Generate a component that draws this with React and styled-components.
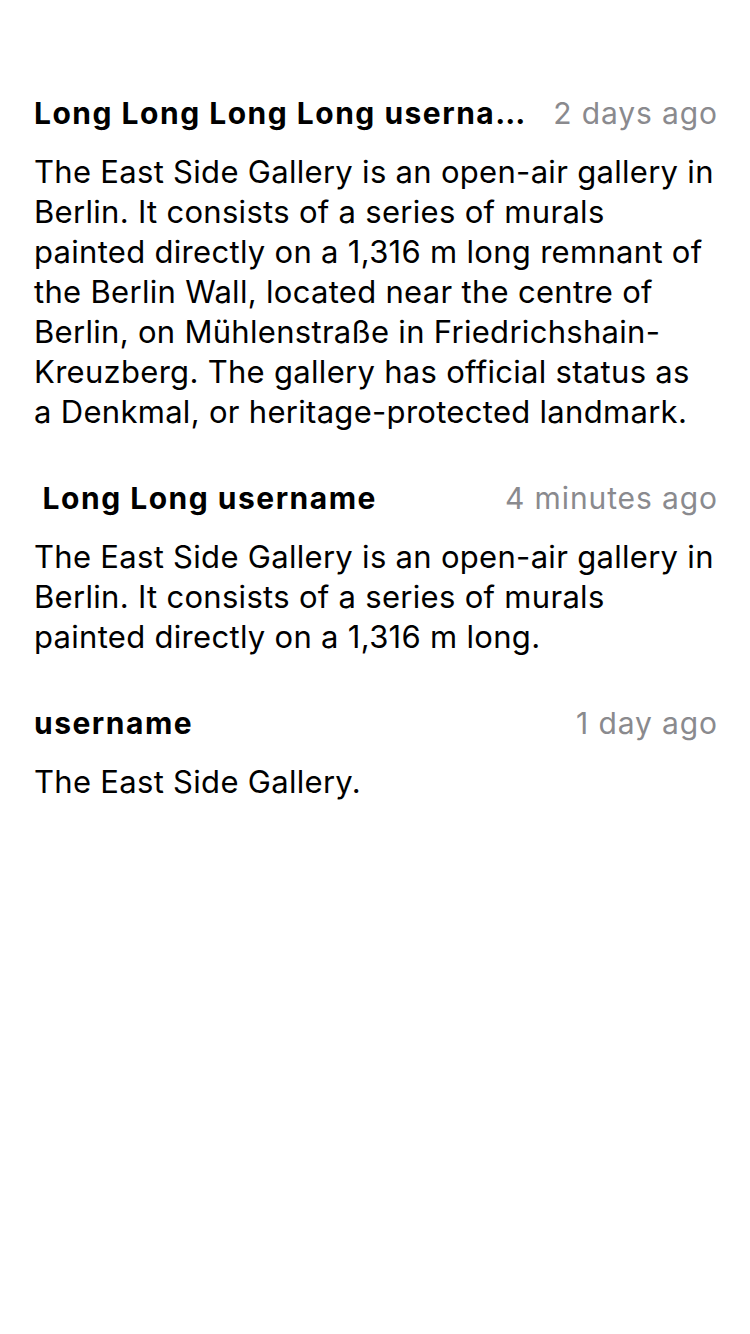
import React from "react";
import styled, { createGlobalStyle } from "styled-components";

const Global = createGlobalStyle`
  html, body { margin: 0; padding: 0; background: #ffffff; }
  body { font-family: Inter, "Noto Sans", sans-serif; color: #000; }
`;

const List = styled.div`
  display: flex;
  flex-direction: column;
  gap: 46px;
  padding: 93px 32px 0 34px;
`;

const Comment = styled.div`
  display: flex;
  flex-direction: column;
  gap: 19px;
`;

const Header = styled.div`
  display: flex;
  align-items: center;
  justify-content: space-between;
  gap: 16px;
  height: 40px;
`;

const Username = styled.span`
  font-size: 30px;
  font-weight: 700;
  letter-spacing: 1.5px;
  white-space: pre;
  overflow: hidden;
  text-overflow: ellipsis;
  min-width: 0;
`;

const Time = styled.span`
  flex-shrink: 0;
  font-size: 30px;
  letter-spacing: 0.9px;
  color: #8a8a8e;
  white-space: nowrap;
`;

const Body = styled.p`
  margin: 0;
  font-size: 31px;
  letter-spacing: 0.3px;
  line-height: 40px;
`;

const comments = [
  {
    user: "Long Long Long Long username",
    time: "2 days ago",
    text: "The East Side Gallery is an open-air gallery in Berlin. It consists of a series of murals painted directly on a 1,316 m long remnant of the Berlin Wall, located near the centre of Berlin, on Mühlenstraße in Friedrichshain-Kreuzberg. The gallery has official status as a\u00a0Denkmal, or heritage-protected landmark.",
  },
  {
    user: " Long Long username",
    time: "4 minutes ago",
    text: "The East Side Gallery is an open-air gallery in Berlin. It consists of a series of murals painted directly on a 1,316 m long.",
  },
  {
    user: "username",
    time: "1 day ago",
    text: "The East Side Gallery.",
  },
];

export default function App() {
  return (
    <>
      <Global />
      <List>
        {comments.map((c, i) => (
          <Comment key={i}>
            <Header>
              <Username>{c.user}</Username>
              <Time>{c.time}</Time>
            </Header>
            <Body>{c.text}</Body>
          </Comment>
        ))}
      </List>
    </>
  );
}
